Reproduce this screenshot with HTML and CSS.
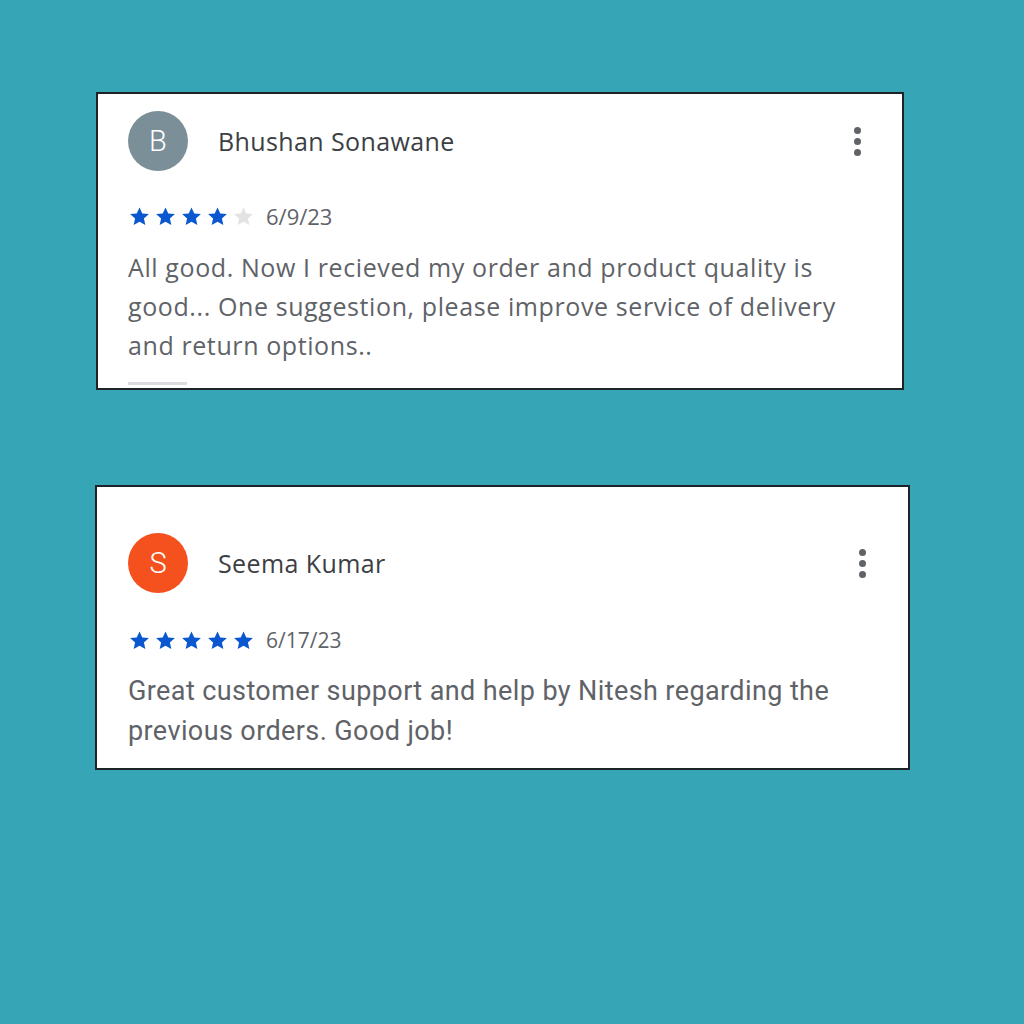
FILE: index.html
```html
<!DOCTYPE html>
<html lang="en">
<head>
  <meta charset="UTF-8" />
  <title>Reviews</title>
  <link rel="stylesheet" href="styles.css">
</head>
<body>
  <svg width="0" height="0" class="defs">
    <symbol id="star" viewBox="0 0 24 24">
      <path d="M12 2.5l2.9 6.3 6.9.7-5.2 4.6 1.5 6.8L12 17.4l-6.1 3.5 1.5-6.8-5.2-4.6 6.9-.7z"/>
    </symbol>
  </svg>
  <main class="reviews">
    <div class="card card-first">
      <div class="head">
        <div class="avatar gray">B</div>
        <div class="name">Bhushan Sonawane</div>
        <div class="more"><span></span><span></span><span></span></div>
      </div>
      <div class="meta">
        <div class="stars">
          <svg class="on"><use href="#star"/></svg>
          <svg class="on"><use href="#star"/></svg>
          <svg class="on"><use href="#star"/></svg>
          <svg class="on"><use href="#star"/></svg>
          <svg class="off"><use href="#star"/></svg>
        </div>
        <span class="date">6/9/23</span>
      </div>
      <p class="text">All good. Now I recieved my order and product quality is good... One suggestion, please improve service of delivery and return options..</p>
      <div class="bar"></div>
    </div>

    <div class="card card-second">
      <div class="head">
        <div class="avatar orange">S</div>
        <div class="name">Seema Kumar</div>
        <div class="more"><span></span><span></span><span></span></div>
      </div>
      <div class="meta">
        <div class="stars">
          <svg class="on"><use href="#star"/></svg>
          <svg class="on"><use href="#star"/></svg>
          <svg class="on"><use href="#star"/></svg>
          <svg class="on"><use href="#star"/></svg>
          <svg class="on"><use href="#star"/></svg>
        </div>
        <span class="date">6/17/23</span>
      </div>
      <p class="text">Great customer support and help by Nitesh regarding the previous orders. Good job!</p>
    </div>
  </main>
</body>
</html>
```

FILE: styles.css
```css
body {
  margin: 0;
  background: #36a6b6;
  font-family: 'Open Sans', sans-serif;
  min-height: 100vh;
}
.defs {
  position: absolute;
}
.reviews {
  padding: 92px 0 0 96px;
  display: flex;
  flex-direction: column;
  gap: 95px;
}
.card {
  background: #fff;
  border: 2px solid #1d2326;
  box-sizing: border-box;
}
.card-first {
  width: 808px;
  height: 298px;
  padding: 17px 0 0 30px;
}
.card-second {
  width: 815px;
  height: 285px;
  margin-left: -1px;
  padding: 46px 0 0 31px;
}
.head {
  display: flex;
  align-items: center;
  height: 60px;
}
.avatar {
  width: 60px;
  height: 60px;
  border-radius: 50%;
  color: #fff;
  display: flex;
  align-items: center;
  justify-content: center;
  font-family: 'Roboto', sans-serif;
  font-weight: 300;
  font-size: 29px;
}
.gray { background: #7b8f98; }
.orange { background: #f4511e; }
.name {
  margin-left: 30px;
  font-size: 25px;
  letter-spacing: 0.4px;
  color: #3c4043;
  flex: 1;
}
.more {
  display: flex;
  flex-direction: column;
  gap: 4px;
  margin-right: 41px;
}
.card-second .more { margin-right: 42px; }
.more span {
  width: 7px;
  height: 7px;
  border-radius: 50%;
  background: #5f6368;
}
.meta {
  display: flex;
  align-items: center;
  margin-top: 30px;
  height: 30px;
}
.card-second .meta { margin-top: 32px; }
.stars {
  display: flex;
  gap: 3px;
}
.stars svg {
  width: 23px;
  height: 23px;
}
.on { fill: #0b57d0; }
.off { fill: #e3e3e3; }
.date {
  margin-left: 11px;
  font-size: 22px;
  color: #5f6368;
}
.card-second .date { font-size: 21px; }
.text {
  margin: 17px 0 0;
  font-size: 25px;
  letter-spacing: 0.6px;
  line-height: 39px;
  color: #5f6368;
  max-width: 730px;
}
.card-second .text {
  font-family: 'Roboto', sans-serif;
  font-size: 27px;
  letter-spacing: 0.4px;
  line-height: 40px;
  margin-top: 16px;
  max-width: 740px;
}
.bar {
  width: 59px;
  height: 3px;
  background: #dadce0;
  margin-top: 17px;
}
```
